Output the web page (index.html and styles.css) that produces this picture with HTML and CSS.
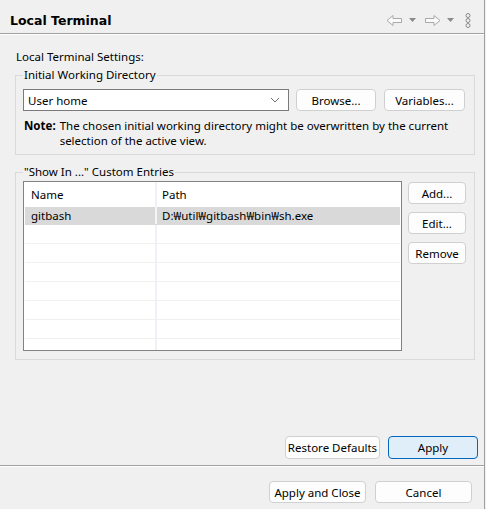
FILE: index.html
```html
<!DOCTYPE html>
<html>
<head>
<meta charset="utf-8">
<link rel="stylesheet" href="styles.css">
</head>
<body>
<div class="app">
  <div class="header">
    <div class="title">Local Terminal</div>
    <div class="tools">
      <svg class="arrow" width="17" height="13" viewBox="0 0 17 13"><path d="M1 6.5 L7 1.5 V4.5 H15.5 V8.5 H7 V11.5 Z" fill="#fafafa" stroke="#a9a9a9" stroke-width="1"/></svg>
      <svg class="tri" width="7" height="4" viewBox="0 0 7 4"><path d="M0 0 H7 L3.5 4 Z" fill="#8a8a8a"/></svg>
      <svg class="arrow" width="17" height="13" viewBox="0 0 17 13"><path d="M16 6.5 L10 1.5 V4.5 H1.5 V8.5 H10 V11.5 Z" fill="#fafafa" stroke="#a9a9a9" stroke-width="1"/></svg>
      <svg class="tri" width="7" height="4" viewBox="0 0 7 4"><path d="M0 0 H7 L3.5 4 Z" fill="#8a8a8a"/></svg>
      <svg class="kebab" width="6" height="15" viewBox="0 0 6 15"><circle cx="3" cy="2.5" r="2" fill="none" stroke="#8a8a8a"/><circle cx="3" cy="7.5" r="2" fill="none" stroke="#8a8a8a"/><circle cx="3" cy="12.5" r="2" fill="none" stroke="#8a8a8a"/></svg>
    </div>
  </div>
  <div class="content">
    <div class="intro">Local Terminal Settings:</div>
    <fieldset class="group g1">
      <legend>Initial Working Directory</legend>
      <div class="row">
        <div class="combo"><span>User home</span>
          <svg width="10" height="6" viewBox="0 0 10 6"><path d="M1 1 L5 5 L9 1" fill="none" stroke="#707070" stroke-width="1"/></svg>
        </div>
        <div class="btn browse">Browse...</div>
        <div class="btn variables">Variables...</div>
      </div>
      <div class="note"><b>Note:</b><span>The chosen initial working directory might be overwritten by the current selection of the active view.</span></div>
    </fieldset>
    <fieldset class="group g2">
      <legend>"Show In ..." Custom Entries</legend>
      <div class="row2">
        <div class="table">
          <div class="tr head"><div class="c1">Name</div><div class="c2">Path</div></div>
          <div class="tr sel"><div class="c1">gitbash</div><div class="c2">D:₩util₩gitbash₩bin₩sh.exe</div></div>
          <div class="tr"><div class="c1"></div><div class="c2"></div></div>
          <div class="tr"><div class="c1"></div><div class="c2"></div></div>
          <div class="tr"><div class="c1"></div><div class="c2"></div></div>
          <div class="tr"><div class="c1"></div><div class="c2"></div></div>
          <div class="tr"><div class="c1"></div><div class="c2"></div></div>
          <div class="tr"><div class="c1"></div><div class="c2"></div></div>
          <div class="tr last"><div class="c1"></div><div class="c2"></div></div>
        </div>
        <div class="side">
          <div class="btn sbtn">Add...</div>
          <div class="btn sbtn">Edit...</div>
          <div class="btn sbtn">Remove</div>
        </div>
      </div>
    </fieldset>
    <div class="spacer"></div>
    <div class="actions">
      <div class="btn restore">Restore Defaults</div>
      <div class="btn apply">Apply</div>
    </div>
  </div>
  <div class="footer">
    <div class="btn applyclose">Apply and Close</div>
    <div class="btn cancel">Cancel</div>
  </div>
</div>
</body>
</html>
```
FILE: styles.css
```css
html, body {
  margin: 0;
  padding: 0;
  background: #f0f0f0;
}
body {
  font-family: "Noto Sans", "Noto Sans CJK KR", sans-serif;
  font-size: 11.5px;
  color: #000;
}
.app {
  width: 485px;
  height: 509px;
  border-right: 1px solid #a0a0a0;
  display: flex;
  flex-direction: column;
  box-sizing: border-box;
}
.header {
  height: 34px;
  box-sizing: border-box;
  border-bottom: 1px solid #a0a0a0;
  box-shadow: 0 1px 0 #ffffff;
  display: flex;
  align-items: center;
  padding: 7px 0 0 10px;
  flex: none;
}
.title {
  font-family: "DejaVu Sans", Verdana, sans-serif;
  font-weight: bold;
  font-size: 12.5px;
  flex: 1;
}
.tools {
  display: flex;
  align-items: center;
  margin-right: 13px;
}
.tools .arrow { margin-right: 6px; }
.tools .tri { margin-right: 8px; }
.tools .kebab { margin-left: 3px; }
.content {
  flex: 1;
  display: flex;
  flex-direction: column;
  padding: 15px 0 0 15px;
}
.intro {
  line-height: 16px;
  padding-left: 1px;
  margin-bottom: 2px;
}
.group {
  width: 460px;
  box-sizing: border-box;
  margin: 0;
  border: 1px solid #d9d9d9;
  padding: 0 0 0 7px;
}
.group legend {
  padding: 0 1px;
  margin-left: 0;
  line-height: 16px;
}
.g1 { height: 88px; padding-top: 6px; }
.row {
  display: flex;
  align-items: center;
}
.combo {
  width: 266px;
  height: 22px;
  box-sizing: border-box;
  border: 1px solid #7a7a7a;
  background: #fff;
  display: flex;
  align-items: center;
  justify-content: space-between;
  padding: 0 8px 0 4px;
}
.btn {
  box-sizing: border-box;
  background: #fdfdfd;
  border: 1px solid #d0d0d0;
  border-radius: 4px;
  display: flex;
  align-items: center;
  justify-content: center;
  height: 22px;
  white-space: nowrap;
}
.browse { width: 80px; margin-left: 7px; }
.variables { width: 81px; margin-left: 8px; }
.note {
  display: flex;
  line-height: 15px;
  margin-top: 7px;
  padding-left: 1px;
}
.note b { flex: none; margin-right: 4px; }
.note span { width: 400px; }
.g2 {
  margin-top: 9px;
  height: 196px;
  padding-top: 1px;
}
.row2 { display: flex; }
.table {
  width: 379px;
  height: 170px;
  box-sizing: border-box;
  border: 1px solid #828282;
  background: #fff;
  overflow: hidden;
  padding: 0 1px;
}
.tr {
  display: flex;
  height: 19px;
  border-bottom: 1px solid #f0f0f0;
  box-sizing: border-box;
}
.tr .c1 {
  width: 132px;
  box-sizing: border-box;
  border-right: 2px solid #eef2f6;
  padding-left: 6px;
  line-height: 18px;
  flex: none;
}
.tr .c2 {
  flex: 1;
  padding-left: 5px;
  line-height: 18px;
}
.tr.head {
  height: 25px;
  border-bottom: none;
}
.tr.head .c1, .tr.head .c2 { line-height: 25px; }
.tr.sel {
  background: #d9d9d9;
  height: 18px;
  border-bottom: 1px solid #d9d9d9;
}
.tr.sel .c1 { border-right-color: #f4f4f4; }
.side {
  display: flex;
  flex-direction: column;
  gap: 8px;
  margin-left: 6px;
  margin-top: 1px;
}
.sbtn { width: 58px; height: 22px; }
.spacer { flex: 1; }
.actions {
  display: flex;
  justify-content: flex-end;
  padding-right: 6px;
  gap: 8px;
  margin-bottom: 6px;
}
.restore { width: 95px; height: 23px; }
.apply { width: 90px; height: 23px; background: #e0eef9; border-color: #0067c0; }
.footer {
  flex: none;
  height: 44px;
  border-top: 1px solid #a0a0a0;
  box-shadow: inset 0 1px 0 #ffffff;
  display: flex;
  justify-content: flex-end;
  padding: 15px 12px 0 0;
  box-sizing: border-box;
  gap: 9px;
}
.applyclose { width: 97px; height: 22px; }
.cancel { width: 97px; height: 22px; }
```
